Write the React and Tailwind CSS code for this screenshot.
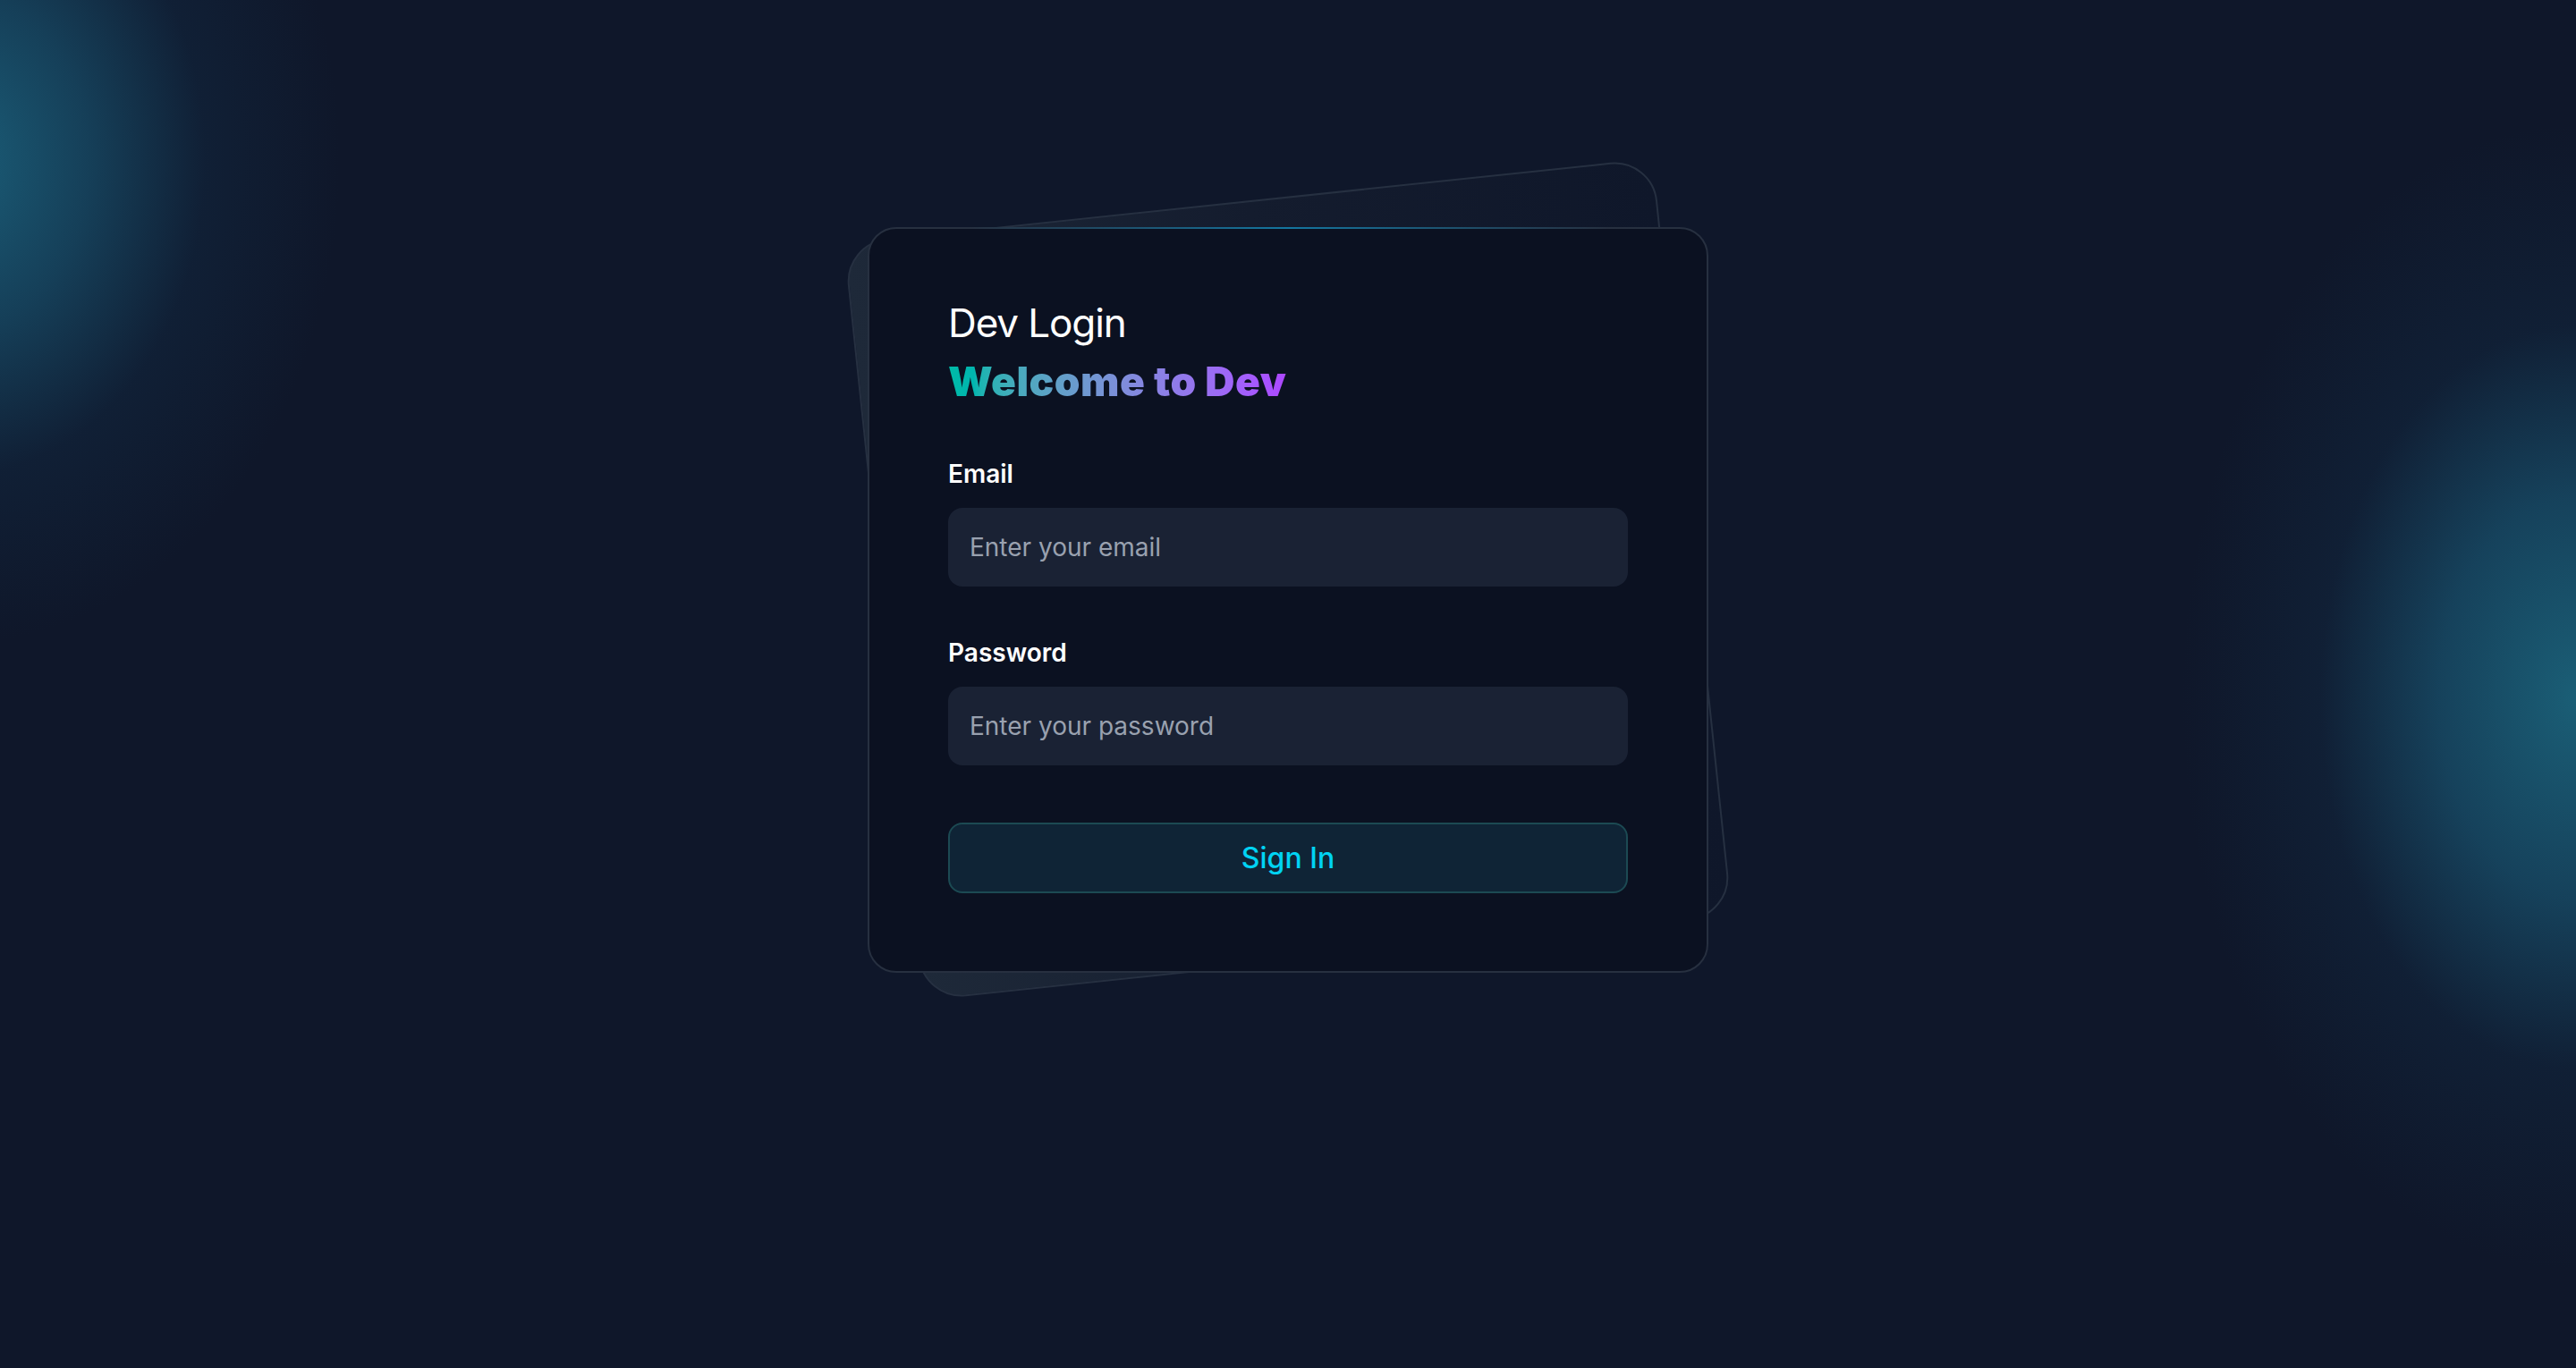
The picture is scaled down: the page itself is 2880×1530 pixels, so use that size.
import React, { useState } from 'react';

export default function App() {
  const [email, setEmail] = useState('');
  const [password, setPassword] = useState('');

  const handleSubmit = (e) => {
    e.preventDefault();
  };

  return (
    <div className="relative min-h-screen w-full overflow-hidden bg-[#0f172a] font-['Inter','Noto_Sans',sans-serif]">
      {/* Background glows */}
      <div className="pointer-events-none absolute left-[-480px] top-[-360px] h-[1080px] w-[860px] rounded-full bg-[radial-gradient(closest-side,rgba(27,98,125,0.95),rgba(24,80,108,0.7)_35%,rgba(18,44,70,0.4)_65%,rgba(15,23,42,0)_100%)]" />
      <div className="pointer-events-none absolute right-[-440px] top-[140px] h-[1280px] w-[880px] rounded-full bg-[radial-gradient(closest-side,rgba(27,98,122,0.95),rgba(24,80,108,0.75)_35%,rgba(18,44,70,0.4)_65%,rgba(15,23,42,0)_100%)]" />

      <main className="relative z-10 flex justify-center pt-[254px]">
        <div className="relative w-[940px]">
          {/* Tilted card behind */}
          <div className="absolute left-[15px] top-[-32px] h-[852px] w-[910px] -rotate-6 rounded-[48px] border-2 border-[#263041] bg-gradient-to-r from-[#1e2939] via-[#141c2e] to-[#0f172a]" />

          {/* Login card */}
          <div className="relative flex flex-col rounded-[32px] border-2 border-[#273040] bg-[#0b1121] px-[88px] pt-[79px] pb-[87px]">
            <div className="absolute inset-x-[110px] top-[-2px] h-[2px] bg-gradient-to-r from-transparent via-sky-400/50 to-transparent" />

            <div className="flex flex-col items-start gap-[13px]">
              <h1 className="text-[44px] font-normal leading-[52px] tracking-tight text-white">Dev Login</h1>
              <h2 className="bg-gradient-to-r from-teal-500 to-purple-500 bg-clip-text text-[46px] font-black leading-[52px] tracking-[0.5px] text-transparent">
                Welcome to Dev
              </h2>
            </div>

            <form onSubmit={handleSubmit} className="mt-[58px] flex flex-col">
              {/* Email field */}
              <div className="flex flex-col gap-[18px]">
                <label className="text-[28px] font-semibold leading-[40px] text-white">Email</label>
                <input
                  type="email"
                  value={email}
                  onChange={(e) => setEmail(e.target.value)}
                  placeholder="Enter your email"
                  className="h-[88px] w-full rounded-[16px] bg-[#1a2234] px-[24px] text-[28px] text-white outline-none placeholder:text-gray-400"
                />
              </div>

              {/* Password field */}
              <div className="mt-[54px] flex flex-col gap-[18px]">
                <label className="text-[28px] font-semibold leading-[40px] text-white">Password</label>
                <input
                  type="password"
                  value={password}
                  onChange={(e) => setPassword(e.target.value)}
                  placeholder="Enter your password"
                  className="h-[88px] w-full rounded-[16px] bg-[#1a2234] px-[24px] text-[28px] text-white outline-none placeholder:text-gray-400"
                />
              </div>

              <button
                type="submit"
                className="mt-[64px] h-[79px] w-full rounded-[16px] border-2 border-[#1c4a53] bg-[#0f2436] text-[32px] font-medium text-cyan-400"
              >
                Sign In
              </button>
            </form>
          </div>
        </div>
      </main>
    </div>
  );
}
